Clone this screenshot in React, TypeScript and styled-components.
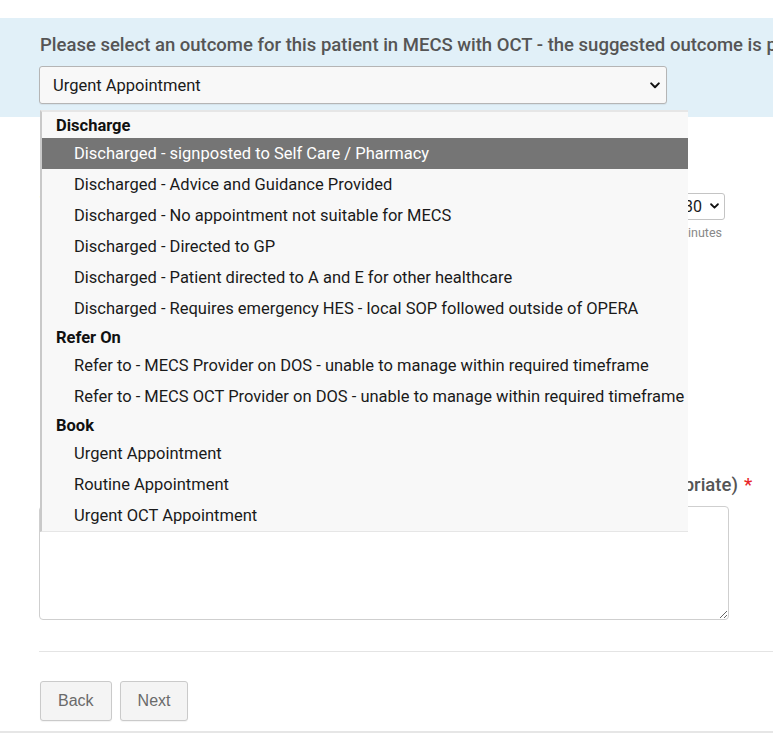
import React from "react";
import styled, { createGlobalStyle } from "styled-components";

const Global = createGlobalStyle`
  html, body { margin: 0; padding: 0; overflow: hidden; background: #fff; }
  body { font-family: Roboto, "Liberation Sans", sans-serif; width: 773px; height: 734px; }
  * { box-sizing: border-box; }
`;

const Page = styled.div`
  padding-top: 18px;
  width: 773px;
  height: 734px;
  position: relative;
  overflow: hidden;
`;

const Band = styled.div`
  background: #e1f0f8;
  padding: 17px 0 13px 40px;
  height: 99px;
`;

const Heading = styled.div`
  font-size: 18.5px;
  font-weight: 500;
  color: #555;
  white-space: nowrap;
  line-height: 20px;
  margin-bottom: 11px;
`;

const SelectWrap = styled.div`
  position: relative;
  width: 628px;
  margin-left: -1px;
`;

const SelectBox = styled.div`
  height: 38px;
  border: 1px solid #b5b5b5;
  border-radius: 3px;
  background: #f8f8f8;
  box-shadow: 0 1px 1px rgba(0,0,0,0.06);
  display: flex;
  align-items: center;
  justify-content: space-between;
  padding: 0 6px 0 13px;
  font-size: 16.5px;
  color: #1a1a1a;
`;

const Popup = styled.div`
  position: absolute;
  top: 44px;
  left: 1px;
  width: 648px;
  background: #f8f8f8;
  border-left: 2px solid #c9c9c9;
  border-top: 2px solid #e6e6e6;
  border-bottom: 1px solid #e6e6e6;
  z-index: 10;
  font-size: 16.5px;
  color: #1a1a1a;
  overflow: hidden;
`;

const GroupLabel = styled.div`
  height: 26px;
  padding-left: 14px;
  font-weight: 700;
  line-height: 28px;
  color: #111;
`;

const Option = styled.div<{ $active?: boolean }>`
  height: 31px;
  line-height: 31px;
  padding-left: 32px;
  white-space: nowrap;
  background: ${(p) => (p.$active ? "#757575" : "transparent")};
  color: ${(p) => (p.$active ? "#fff" : "#1a1a1a")};
`;

const Content = styled.div`
  padding: 0 0 0 40px;
`;

const FieldLabel = styled.div`
  font-size: 18.5px;
  font-weight: 500;
  color: #555;
  white-space: nowrap;
  line-height: 20px;
`;

const Req = styled.span`
  color: #e8262a;
  margin-left: 6px;
`;

const TimeBlock = styled.div`
  margin-top: 76px;
  display: grid;
  grid-template-columns: 637px auto;
  align-items: start;
`;

const TimeCol = styled.div`
  display: flex;
  flex-direction: column;
  gap: 5px;
`;

const SmallSelect = styled.div`
  width: 48px;
  height: 27px;
  border: 1px solid #c4c4c4;
  border-radius: 3px;
  background: #fff;
  display: flex;
  align-items: center;
  justify-content: space-between;
  padding: 0 5px 0 6px;
  font-size: 16px;
  color: #1a1a1a;
`;

const Helper = styled.div`
  font-size: 12.5px;
  color: #888;
`;

const NotesLabel = styled(FieldLabel)`
  margin-top: 235px;
`;

const TextArea = styled.textarea`
  display: block;
  margin-top: 11px;
  margin-left: -1px;
  width: 690px;
  height: 114px;
  border: 1px solid #cfcfcf;
  border-radius: 4px;
  background: #fff;
  resize: vertical;
  font-family: inherit;
`;

const Rule = styled.div`
  margin-top: 31px;
  margin-left: -1px;
  height: 1px;
  background: #e4e4e4;
`;

const Buttons = styled.div`
  margin-top: 29px;
  display: flex;
  gap: 8px;
`;

const Button = styled.button`
  height: 40px;
  padding: 0 17px;
  border: 1px solid #cacaca;
  border-radius: 3px;
  background: #f4f4f4;
  color: #6a6a6a;
  font-family: "Liberation Sans", Arial, sans-serif;
  font-size: 16px;
  box-shadow: 0 1px 1px rgba(0,0,0,0.05);
`;

const BottomLine = styled.div`
  margin-top: 10px;
  margin-left: -40px;
  height: 2px;
  background: #e6e6e6;
`;

const Chevron = ({ size = 10 }: { size?: number }) => (
  <svg width={size} height={size * 0.7} viewBox="0 0 10 7">
    <path d="M1.2 1.4 L5 5.2 L8.8 1.4" fill="none" stroke="#111" strokeWidth="2" strokeLinecap="round" strokeLinejoin="round" />
  </svg>
);

const groups: { label: string; items: string[] }[] = [
  {
    label: "Discharge",
    items: [
      "Discharged - signposted to Self Care / Pharmacy",
      "Discharged - Advice and Guidance Provided",
      "Discharged - No appointment not suitable for MECS",
      "Discharged - Directed to GP",
      "Discharged - Patient directed to A and E for other healthcare",
      "Discharged - Requires emergency HES - local SOP followed outside of OPERA",
    ],
  },
  {
    label: "Refer On",
    items: [
      "Refer to - MECS Provider on DOS - unable to manage within required timeframe",
      "Refer to - MECS OCT Provider on DOS - unable to manage within required timeframe",
    ],
  },
  {
    label: "Book",
    items: ["Urgent Appointment", "Routine Appointment", "Urgent OCT Appointment"],
  },
];

export default function App() {
  return (
    <>
      <Global />
      <Page>
        <Band>
          <Heading>
            Please select an outcome for this patient in MECS with OCT - the suggested outcome is provided below
          </Heading>
          <SelectWrap>
            <SelectBox>
              <span>Urgent Appointment</span>
              <Chevron />
            </SelectBox>
            <Popup>
              {groups.map((g) => (
                <div key={g.label}>
                  <GroupLabel>{g.label}</GroupLabel>
                  {g.items.map((it) => (
                    <Option key={it} $active={it === "Discharged - signposted to Self Care / Pharmacy"}>
                      {it}
                    </Option>
                  ))}
                </div>
              ))}
            </Popup>
          </SelectWrap>
        </Band>
        <Content>
          <TimeBlock>
            <FieldLabel>Time spent on this referral</FieldLabel>
            <TimeCol>
              <SmallSelect>
                <span>30</span>
                <Chevron size={9} />
              </SmallSelect>
              <Helper>minutes</Helper>
            </TimeCol>
          </TimeBlock>
          <NotesLabel>
            Please record the clinical advice which was given to your patient (where appropriate)
            <Req>*</Req>
          </NotesLabel>
          <TextArea />
          <Rule />
          <Buttons>
            <Button>Back</Button>
            <Button>Next</Button>
          </Buttons>
          <BottomLine />
        </Content>
      </Page>
    </>
  );
}
